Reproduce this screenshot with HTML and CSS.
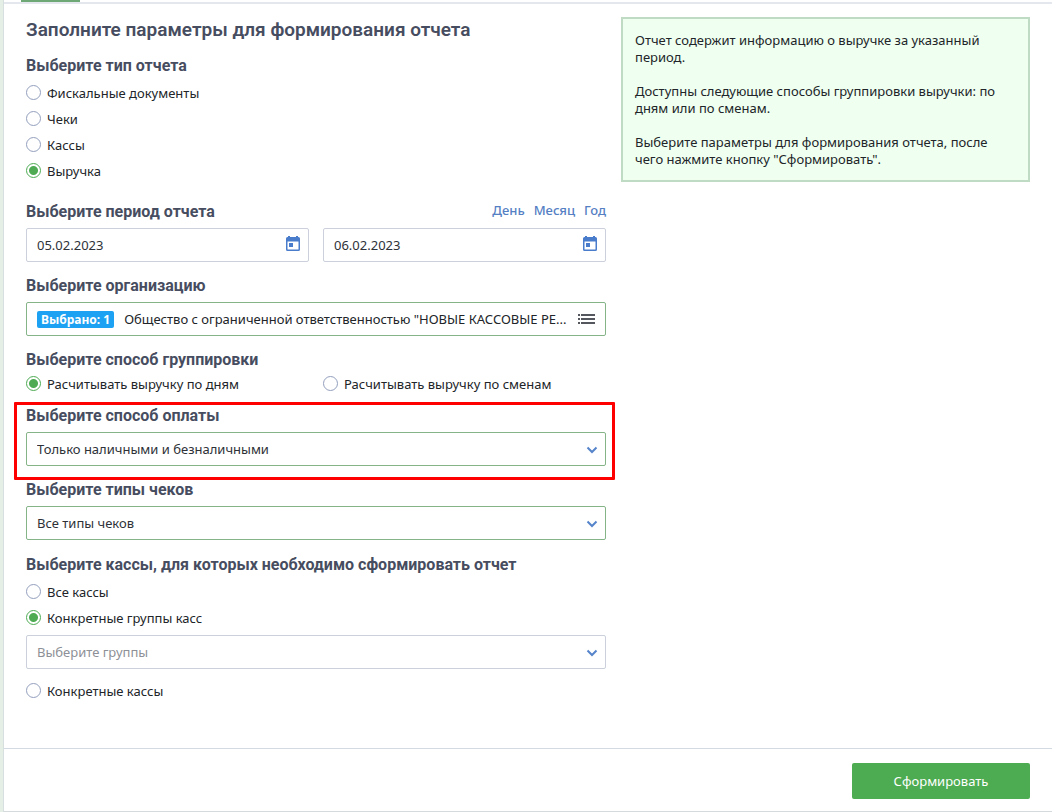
FILE: index.html
```
<!DOCTYPE html>
<html lang="ru">
<head>
    <meta charset="UTF-8">
    <meta name="viewport" content="width=device-width, initial-scale=1.0">
    <title>Формирование отчета</title>
    <link rel="stylesheet" href="styles.css">
</head>
<body>
    <form class="card">
        <div class="tabs"><div class="tab-active"></div></div>
        <div class="content">
            <div class="params">
                <h1>Заполните параметры для формирования отчета</h1>

                <section class="section section-type">
                    <h2>Выберите тип отчета</h2>
                    <label class="radio"><input type="radio" name="type"><span>Фискальные документы</span></label>
                    <label class="radio"><input type="radio" name="type"><span>Чеки</span></label>
                    <label class="radio"><input type="radio" name="type"><span>Кассы</span></label>
                    <label class="radio"><input type="radio" name="type" checked><span>Выручка</span></label>
                </section>

                <section class="section">
                    <div class="section-head">
                        <h2>Выберите период отчета</h2>
                        <nav class="periods">
                            <a href="#">День</a>
                            <a href="#">Месяц</a>
                            <a href="#">Год</a>
                        </nav>
                    </div>
                    <div class="two-cols">
                        <div class="field">
                            <input type="text" class="control" value="05.02.2023" aria-label="Начало периода">
                            <svg class="icon-calendar" viewBox="0 0 14 15">
                                <path fill-rule="evenodd" d="M2 0h2v1h6V0h2v1h.5A1.500 1.500 0 0 1 14 2.500v11a1.500 1.500 0 0 1-1.500 1.500h-11A1.500 1.500 0 0 1 0 13.500v-11A1.500 1.500 0 0 1 1.500 1H2zM1.500 5.500v8h11v-8zM3 7h4v4H3z"/>
                            </svg>
                        </div>
                        <div class="field">
                            <input type="text" class="control" value="06.02.2023" aria-label="Конец периода">
                            <svg class="icon-calendar" viewBox="0 0 14 15">
                                <path fill-rule="evenodd" d="M2 0h2v1h6V0h2v1h.5A1.500 1.500 0 0 1 14 2.500v11a1.500 1.500 0 0 1-1.500 1.500h-11A1.500 1.500 0 0 1 0 13.500v-11A1.500 1.500 0 0 1 1.500 1H2zM1.500 5.500v8h11v-8zM3 7h4v4H3z"/>
                            </svg>
                        </div>
                    </div>
                </section>

                <section class="section">
                    <h2>Выберите организацию</h2>
                    <button type="button" class="control valid organization">
                        <span class="badge">Выбрано: 1</span>
                        <span class="organization-name">Общество с ограниченной ответственностью "НОВЫЕ КАССОВЫЕ РЕ...</span>
                        <svg class="icon-list" viewBox="0 0 17 10">
                            <path d="M0 1h2M3 1h14M0 5h2M3 5h14M0 9h2M3 9h14"/>
                        </svg>
                    </button>
                </section>

                <section class="section">
                    <h2>Выберите способ группировки</h2>
                    <div class="two-cols">
                        <label class="radio"><input type="radio" name="group" checked><span>Расчитывать выручку по дням</span></label>
                        <label class="radio"><input type="radio" name="group"><span>Расчитывать выручку по сменам</span></label>
                    </div>
                </section>

                <section class="section section-payment">
                    <h2><label for="payment">Выберите способ оплаты</label></h2>
                    <div class="field">
                        <select id="payment" class="control valid">
                            <option>Только наличными и безналичными</option>
                        </select>
                        <svg class="icon-arrow" viewBox="0 0 12 8"><path d="M1.500 1.500 6 6l4.500-4.500"/></svg>
                    </div>
                </section>

                <section class="section">
                    <h2><label for="receipts">Выберите типы чеков</label></h2>
                    <div class="field">
                        <select id="receipts" class="control valid">
                            <option>Все типы чеков</option>
                        </select>
                        <svg class="icon-arrow" viewBox="0 0 12 8"><path d="M1.500 1.500 6 6l4.500-4.500"/></svg>
                    </div>
                </section>

                <section class="section section-cash">
                    <h2>Выберите кассы, для которых необходимо сформировать отчет</h2>
                    <label class="radio"><input type="radio" name="cash"><span>Все кассы</span></label>
                    <label class="radio"><input type="radio" name="cash" checked><span>Конкретные группы касс</span></label>
                    <div class="field">
                        <select class="control empty" aria-label="Группы касс">
                            <option>Выберите группы</option>
                        </select>
                        <svg class="icon-arrow" viewBox="0 0 12 8"><path d="M1.500 1.500 6 6l4.500-4.500"/></svg>
                    </div>
                    <label class="radio"><input type="radio" name="cash"><span>Конкретные кассы</span></label>
                </section>
            </div>

            <aside class="info">
                <p>Отчет содержит информацию о выручке за указанный период.</p>
                <p>Доступны следующие способы группировки выручки: по дням или по сменам.</p>
                <p>Выберите параметры для формирования отчета, после чего нажмите кнопку "Сформировать".</p>
            </aside>
        </div>
        <div class="footer">
            <button type="button" class="submit">Сформировать</button>
        </div>
    </form>
</body>
</html>
```
FILE: styles.css
```
* {
    box-sizing: border-box;
}
body {
    margin: 0;
    padding-left: 3px;
    background: #e6efe6;
    font-family: "Noto Sans", sans-serif;
    font-size: 13px;
    line-height: 17px;
    color: #212529;
}
h1, h2, p {
    margin: 0;
}
h1, h2 {
    font-family: Roboto, sans-serif;
    color: #474d60;
}
h1 {
    font-size: 19px;
    font-weight: 600;
    line-height: 24px;
}
h2 {
    font-size: 16px;
    font-weight: 700;
    line-height: 20px;
}
.card {
    background: #fff;
    border-left: 1px solid #d8dfdf;
    border-bottom: 1px solid #d5dadd;
}
.tabs {
    height: 4px;
    padding: 0 17px;
    border-bottom: 2px solid #e4e7ed;
}
.tab-active {
    width: 59px;
    height: 2px;
    background: #6fa877;
}
.content {
    display: grid;
    grid-template-columns: 580fr 409fr;
    gap: 15px;
    align-items: start;
    padding: 13px 22px 45px;
}

/* Form */
.params {
    min-width: 0;
    padding-top: 1px;
}
.section {
    display: flex;
    flex-direction: column;
    margin-top: 14px;
}
.section-type {
    padding-bottom: 5px;
}
.section-head {
    display: flex;
    justify-content: space-between;
}
.periods {
    display: flex;
    gap: 9px;
    font-weight: 500;
}
.periods a {
    color: #5580c4;
    text-decoration: none;
}
.two-cols {
    display: grid;
    grid-template-columns: 1fr 1fr;
    gap: 14px;
}
h2 + .radio {
    margin-top: 3px;
}
.radio {
    display: flex;
    align-items: center;
    gap: 6px;
    height: 26px;
}
.radio span {
    padding-top: 2px;
}
.radio input {
    appearance: none;
    width: 15px;
    height: 15px;
    margin: 0;
    border: 1px solid #939fbd;
    border-radius: 50%;
    background: #fff;
}
.radio input:checked {
    border-color: #4eab54;
    background: radial-gradient(circle, #4eab54 4px, #fff 5px);
}
.field {
    position: relative;
}
.control {
    display: block;
    appearance: none;
    width: 100%;
    height: 34px;
    margin-top: 6px;
    padding: 0 10px;
    border: 1px solid #cbd0dc;
    border-radius: 2px;
    background: #fff;
    font: inherit;
    color: #2e3238;
}
.valid {
    border-color: #86b489;
}
.empty {
    margin-top: 5px;
    color: #8d9096;
}
.icon-calendar {
    position: absolute;
    right: 9px;
    bottom: 11px;
    width: 14px;
    height: 15px;
    fill: #4a7ccc;
}
.icon-arrow {
    position: absolute;
    right: 8px;
    bottom: 12px;
    width: 12px;
    height: 8px;
    fill: none;
    stroke: #5584ca;
    stroke-width: 2;
}
.organization {
    display: flex;
    align-items: center;
    text-align: left;
    color: #212529;
}
.badge {
    flex: none;
    padding: 0 4px;
    border-radius: 2px;
    background: #1da1f2;
    font-size: 12px;
    font-weight: 700;
    color: #fff;
}
.organization-name {
    flex: 1;
    margin: 0 4px 0 10px;
    overflow: hidden;
    text-overflow: ellipsis;
    white-space: nowrap;
}
.icon-list {
    flex: none;
    width: 17px;
    height: 10px;
    stroke: #54575e;
    stroke-width: 2;
}
.section-payment {
    position: relative;
    margin-top: 10px;
}
.section-payment::after {
    content: "";
    position: absolute;
    inset: -4px -9px -14px -12px;
    border: 3px solid #f00;
    border-radius: 1px;
    pointer-events: none;
}
.section-cash {
    margin-top: 15px;
}
.field + .radio {
    margin-top: 8px;
}

/* Hint */
.info {
    padding: 13px 12px 12px;
    border: 2px solid #c0dbc4;
    background: #effff0;
}
.info p + p {
    margin-top: 17px;
}

.footer {
    display: flex;
    justify-content: flex-end;
    padding: 14px 22px 12px;
    border-top: 1px solid #d3dae2;
}
.submit {
    min-width: 178px;
    height: 36px;
    border: 0;
    border-radius: 2px;
    background: #4dac51;
    font: inherit;
    color: #fff;
}
```
